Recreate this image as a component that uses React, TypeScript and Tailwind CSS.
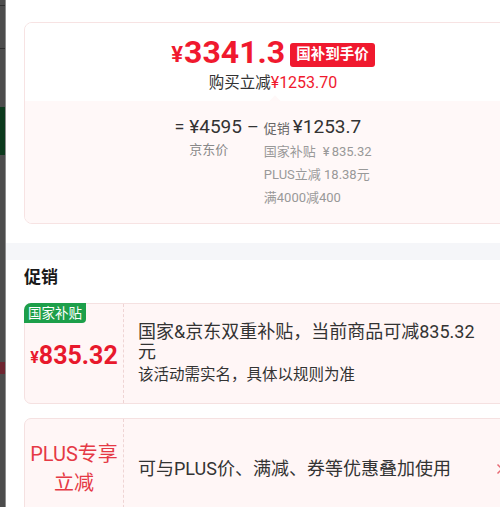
export default function App() {
  return (
    <div className="w-[500px] h-[507px] overflow-hidden flex items-start bg-white font-['Roboto','Noto_Sans_CJK_SC',sans-serif]">
      <div className="w-[6px] h-[507px] shrink-0 flex flex-col bg-[#4c4c4c] border-r border-[#8e8e8e]">
        <div className="h-[5px] shrink-0" />
        <div className="h-px shrink-0 bg-[#2e2e2e]" />
        <div className="h-[42px] shrink-0" />
        <div className="h-px shrink-0 bg-[#2e2e2e]" />
        <div className="h-[58px] shrink-0" />
        <div className="h-[48px] shrink-0 bg-[#0c3a1d]" />
        <div className="h-[207px] shrink-0" />
        <div className="h-[12px] shrink-0 bg-[#6e2530]" />
      </div>
      <div className="w-[534px] shrink-0">
        <div className="pt-[22px] pl-[18px]">
          <div className="w-[498px] rounded-[8px] border border-[#f7e3e3] overflow-hidden">
            <div className="h-[78px] bg-white flex flex-col items-center pt-[9px]">
              <div className="flex items-center h-[40px]">
                <span className="text-[#f0192e] font-bold text-[22px] leading-none mt-[6px]">¥</span>
                <span className="text-[#f0192e] font-bold text-[32px] leading-[40px] ml-[1px]">3341.3</span>
                <span className="ml-[5px] mt-[6px] bg-[#f0192e] text-white text-[14.5px] font-bold rounded-[3px] px-[6px] h-[24px] leading-[24px]">国补到手价</span>
              </div>
              <div className="text-[15.5px] leading-[22px] text-[#333]">
                购买立减<span className="text-[#f0192e] text-[16px]">¥1253.70</span>
              </div>
            </div>
            <div className="relative h-[122px] bg-[#fff8f8] flex justify-center pt-[13px]">
              <div className="absolute left-[246px] -top-[4px] w-[8px] h-[8px] rotate-45 bg-[#fff8f8]" />
              <div className="flex items-start">
                <span className="text-[18px] leading-[26px] text-[#333] mr-[5px]">=</span>
                <div className="flex flex-col items-start">
                  <span className="text-[19px] leading-[26px] text-[#333]">¥4595</span>
                  <span className="text-[13px] leading-[20px] text-[#888]">京东价</span>
                </div>
                <span className="text-[18px] leading-[26px] text-[#333] mx-[5px]">–</span>
                <div className="flex flex-col items-start">
                  <div className="flex items-baseline h-[26px]">
                    <span className="text-[13px] leading-[26px] text-[#666]">促销</span>
                    <span className="text-[19px] leading-[26px] text-[#333] ml-[3px]">¥1253.7</span>
                  </div>
                  <div className="text-[13px] leading-[23px] text-[#999]">
                    国家补贴<span className="ml-[7px]">¥</span>
                    <span className="ml-[2px]">835.32</span>
                  </div>
                  <div className="text-[13px] leading-[23px] text-[#999]">PLUS立减 18.38元</div>
                  <div className="text-[13px] leading-[23px] text-[#999]">满4000减400</div>
                </div>
              </div>
            </div>
          </div>
        </div>
        <div className="mt-[19px] h-[17px] bg-[#f5f6f9]" />
        <div className="pl-[18px] pt-[5px] text-[17px] leading-[24px] font-semibold text-[#1a1a1a]">促销</div>
        <div className="pl-[18px] pt-[14px] flex flex-col gap-[14px]">
          <div className="relative w-[498px] h-[101px] shrink-0 rounded-[7px] border border-[#f5e1e1] bg-[#fff6f6] flex">
            <div className="absolute -left-px -top-px h-[20px] w-[62px] bg-[#1d9f4a] text-white text-[13.5px] leading-[20px] flex items-center justify-center rounded-tl-[7px] rounded-br-[4px]">
              国家补贴
            </div>
            <div className="w-[99px] shrink-0 border-r border-dashed border-[#efd4d4] flex items-center justify-center pt-[4px]">
              <span className="text-[#e8192c] font-bold text-[16px] mt-[5px]">¥</span>
              <span className="text-[#e8192c] font-bold text-[25px] leading-[30px]">835.32</span>
            </div>
            <div className="flex-1 pl-[14px] flex flex-col justify-center">
              <div className="text-[18px] leading-[20px] text-[#333]">
                国家&amp;京东双重补贴，当前商品可减835.32
                <br />元
              </div>
              <div className="mt-[2px] text-[15.5px] leading-[22px] text-[#333]">该活动需实名，具体以规则为准</div>
            </div>
          </div>
          <div className="w-[498px] h-[101px] shrink-0 rounded-[7px] border border-[#f5e1e1] bg-[#fff6f6] flex">
            <div className="w-[99px] shrink-0 border-r border-dashed border-[#efd4d4] flex flex-col items-center justify-center">
              <span className="text-[#e53945] text-[20px] leading-[29px]">PLUS专享</span>
              <span className="text-[#e53945] text-[20px] leading-[29px]">立减</span>
            </div>
            <div className="flex-1 pl-[14px] pr-[17px] flex items-center justify-between">
              <span className="text-[18px] leading-[24px] text-[#333]">可与PLUS价、满减、券等优惠叠加使用</span>
              <svg width="8" height="12" viewBox="0 0 8 12" fill="none">
                <path d="M1.5 1.5 L6 6 L1.5 10.5" stroke="#e86a74" strokeWidth="1.5" />
              </svg>
            </div>
          </div>
        </div>
      </div>
    </div>
  );
}
